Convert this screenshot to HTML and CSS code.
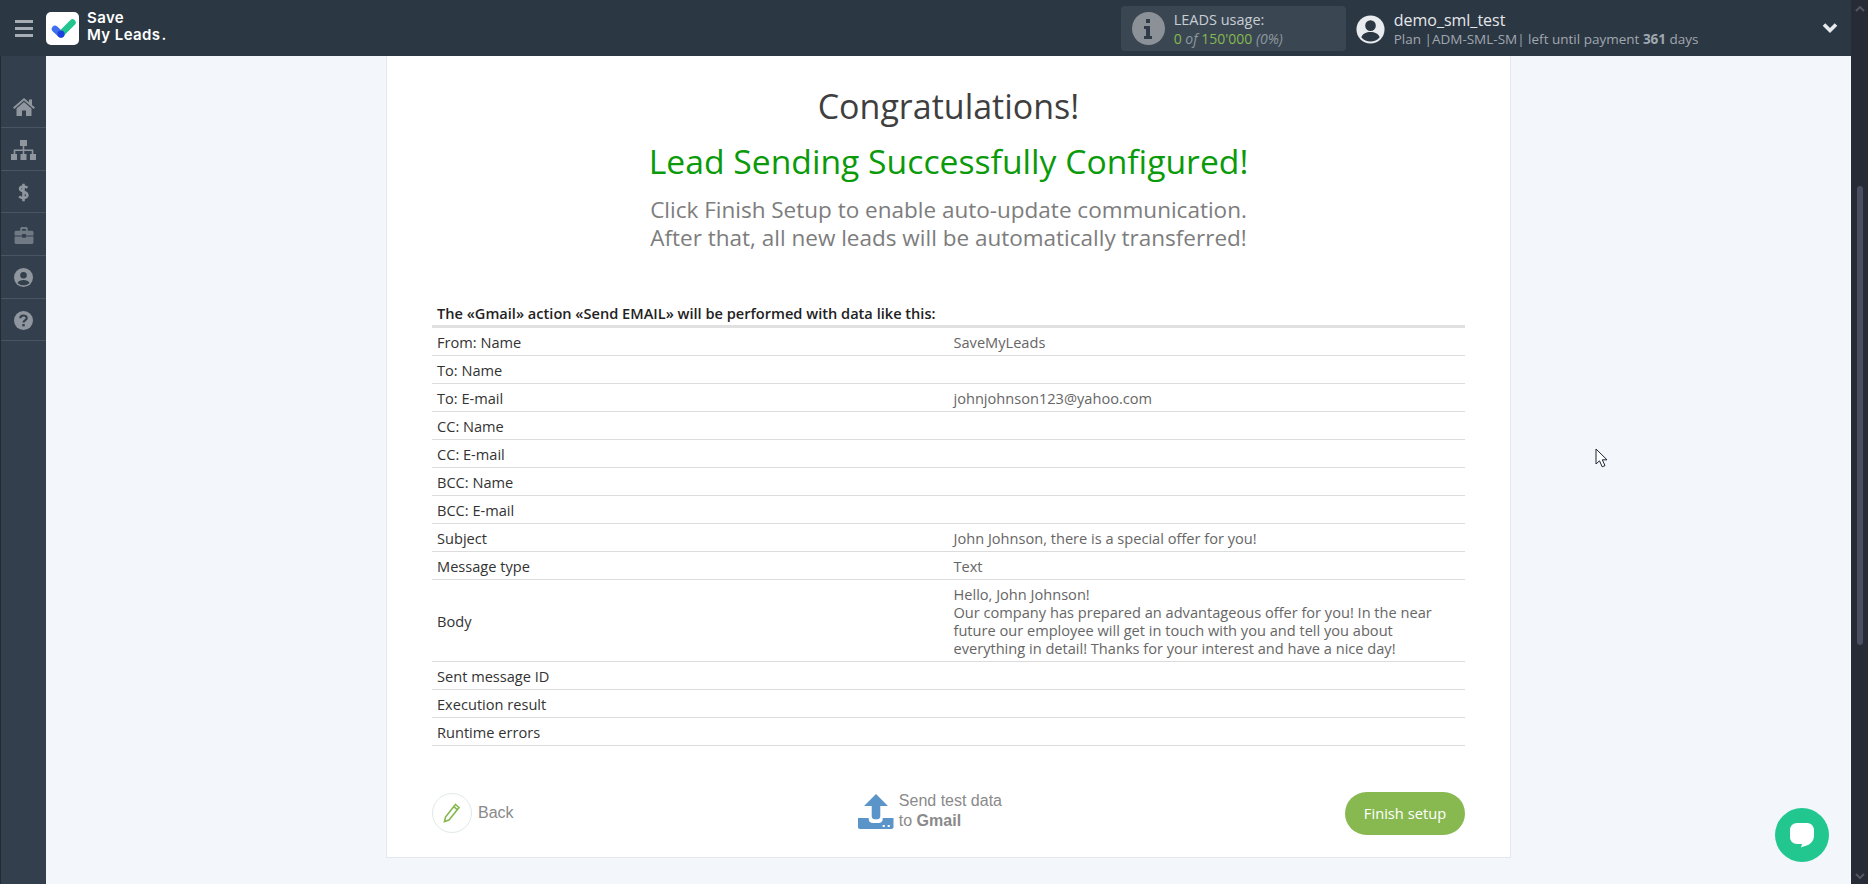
FILE: index.html
```html
<!DOCTYPE html>
<html>

<head>
    <meta charset="utf-8">
    <title>Save My Leads</title>
    <link rel="stylesheet" href="styles.css">
</head>

<body>
    <div id="app">
        <header class="topbar">
            <div class="burger"><span></span><span></span><span></span></div>
            <div class="logo">
                <svg class="logo-mark" width="33" height="33" viewBox="0 0 33 33">
                    <rect width="33" height="33" rx="5" fill="#fff"/>
                    <path d="M9 17l6 5.500" stroke="#3f6ff0" stroke-width="6.500" stroke-linecap="round"/>
                    <path d="M15 22L26.500 10.500" stroke="#22c58f" stroke-width="6.500" stroke-linecap="round"/>
                    <circle cx="15" cy="22" r="3.600" fill="#1d3fe0"/>
                </svg>
                <div class="logo-text">Save<br>My Leads<span class="logo-dot">.</span></div>
            </div>
            <div class="usage">
                <div class="usage-icon">
                    <svg width="10" height="20" viewBox="0 0 10 20"><path d="M3 0h4v4H3zM1 7h6v10h2v3H1v-3h2v-7H1z" fill="#2f3b48"/></svg>
                </div>
                <div class="usage-text">
                    <div class="usage-title">LEADS usage:</div>
                    <div class="usage-count"><span class="green">0</span> <i>of</i> <span class="green">150'000</span> <i>(0%)</i></div>
                </div>
            </div>
            <div class="account">
                <svg class="account-icon" width="29" height="29" viewBox="0 0 30 30">
                    <circle cx="15" cy="15" r="14.500" fill="#e9ecef"/>
                    <circle cx="15" cy="11" r="5.500" fill="#2c3744"/>
                    <path d="M5.500 23c1.500-4 5-5.500 9.500-5.500s8 1.500 9.500 5.500c-2.500 3-5.800 4.500-9.500 4.500s-7-1.500-9.500-4.500z" fill="#2c3744"/>
                </svg>
                <div class="account-text">
                    <div class="account-name">demo_sml_test</div>
                    <div class="account-plan">Plan |ADM-SML-SM| left until payment <b>361</b> days</div>
                </div>
            </div>
            <svg class="chevron" width="16" height="12" viewBox="0 0 16 12"><path d="M2 2.500l6 6 6-6" fill="none" stroke="#e8ebee" stroke-width="3.600"/></svg>
        </header>

        <div class="main">
            <nav class="sidebar">
                <a class="side-item">
                    <svg width="22" height="18" viewBox="0 0 22 18"><path d="M11 0L0 9.500l1.300 1.400L11 2.600l9.700 8.300L22 9.500l-3-2.600V1.500h-3v2.800z M11 4L3.500 10.400V18h5.500v-5.500h4V18h5.500v-7.600z" fill="#8f969e"/></svg>
                </a>
                <a class="side-item">
                    <svg width="25" height="20" viewBox="0 0 25 20"><path d="M9 0h7v6H9zM0 14h6v6H0zM9.500 14h6v6h-6zM19 14h6v6h-6zM11.700 6h1.600v3.500h9V14h-1.600v-2.900h-7.400V14h-1.600v-2.900H4.300V14H2.700V9.500h9z" fill="#8f969e"/></svg>
                </a>
                <a class="side-item">
                    <svg width="11" height="19" viewBox="0 0 12 22"><path d="M10.500 5.500C9.500 4.500 8 4 6 4 3.500 4 2 5 2 6.700c0 4 8.500 2 8.500 7.400 0 2-2 3.400-4.500 3.400-2 0-3.800-.6-5-1.900M6 1v20" fill="none" stroke="#8f969e" stroke-width="3"/></svg>
                </a>
                <a class="side-item">
                    <svg width="20" height="17" viewBox="0 0 20 18"><path d="M6 4V1.500C6 .7 6.700 0 7.500 0h5c.8 0 1.500.7 1.500 1.500V4h4.500c.8 0 1.500.7 1.500 1.500V9h-8V7.500H8V9H0V5.500C0 4.700.7 4 1.500 4zM8 2v2h4V2zM0 10h8v1.500h4V10h8v6.500c0 .8-.7 1.500-1.500 1.500h-17C.7 18 0 17.300 0 16.500z" fill="#6f7a85"/></svg>
                </a>
                <a class="side-item">
                    <svg width="19" height="19" viewBox="0 0 19 19"><circle cx="9.500" cy="9.500" r="9.500" fill="#8f969e"/><circle cx="9.500" cy="7.300" r="3.300" fill="#333f4d"/><path d="M3.500 15c1-2.200 3.200-3 6-3s5 .8 6 3c-1.500 1.500-3.700 2.300-6 2.300s-4.500-.8-6-2.300z" fill="#333f4d"/></svg>
                </a>
                <a class="side-item">
                    <svg width="19" height="19" viewBox="0 0 19 19"><circle cx="9.500" cy="9.500" r="9.500" fill="#8f969e"/><path d="M6.300 7.200c0-1.700 1.400-2.700 3.200-2.700s3.200 1 3.200 2.500c0 2.300-3.200 2.300-3.200 4.400" fill="none" stroke="#333f4d" stroke-width="2.200"/><rect x="8.300" y="13" width="2.400" height="2.400" fill="#333f4d"/></svg>
                </a>
            </nav>

            <div class="content">
                <section class="card">
                    <h1 class="congrats">Congratulations!</h1>
                    <h2 class="configured">Lead Sending Successfully Configured!</h2>
                    <p class="hint">Click Finish Setup to enable auto-update communication.<br>After that, all new leads will be automatically transferred!</p>

                    <table class="data">
                        <thead>
                            <tr><th colspan="2">The «Gmail» action «Send EMAIL» will be performed with data like this:</th></tr>
                        </thead>
                        <tbody>
                            <tr><td>From: Name</td><td>SaveMyLeads</td></tr>
                            <tr><td>To: Name</td><td></td></tr>
                            <tr><td>To: E-mail</td><td>johnjohnson123@yahoo.com</td></tr>
                            <tr><td>CC: Name</td><td></td></tr>
                            <tr><td>CC: E-mail</td><td></td></tr>
                            <tr><td>BCC: Name</td><td></td></tr>
                            <tr><td>BCC: E-mail</td><td></td></tr>
                            <tr><td>Subject</td><td>John Johnson, there is a special offer for you!</td></tr>
                            <tr><td>Message type</td><td>Text</td></tr>
                            <tr><td>Body</td><td>Hello, John Johnson!<br>Our company has prepared an advantageous offer for you! In the near future our employee will get in touch with you and tell you about everything in detail! Thanks for your interest and have a nice day!</td></tr>
                            <tr><td>Sent message ID</td><td></td></tr>
                            <tr><td>Execution result</td><td></td></tr>
                            <tr><td>Runtime errors</td><td></td></tr>
                        </tbody>
                    </table>

                    <div class="actions">
                        <a class="back">
                            <span class="back-circle">
                                <svg width="18" height="20" viewBox="0 0 18 20"><path d="M12.500 1.500l3.500 3L6 17l-4.500 1.500L2.500 14zM10.800 3.700l3.500 3" fill="none" stroke="#85b84f" stroke-width="1.600"/></svg>
                            </span>
                            Back
                        </a>
                        <a class="send-test">
                            <svg width="36" height="35" viewBox="0 0 36 35"><path d="M18 0l12 12h-7.700v10c0 2-1.300 3.300-3 3.300h-2.600c-1.700 0-3-1.300-3-3.300V12H6z" fill="#5b94c8"/><path d="M0 24h10.700v1c0 2.500 1.800 4 4 4h6c2.200 0 4-1.500 4-4v-1H35.500v9c0 1-.8 2-2 2H2c-1.200 0-2-1-2-2z" fill="#5b94c8"/><rect x="24.700" y="31" width="2" height="2" fill="#fff"/><rect x="29.700" y="31" width="2" height="2" fill="#fff"/></svg>
                            <span class="send-text">Send test data<br>to <b>Gmail</b></span>
                        </a>
                        <a class="finish">Finish setup</a>
                    </div>
                </section>
            </div>
        </div>

        <div class="scrollbar">
            <span class="scroll-arrow">
                <svg width="10" height="6" viewBox="0 0 10 6"><path d="M1 5l4-4 4 4" fill="none" stroke="#55575e" stroke-width="2"/></svg>
            </span>
            <div class="scroll-track"><div class="scroll-thumb"></div></div>
            <span class="scroll-arrow">
                <svg width="10" height="6" viewBox="0 0 10 6"><path d="M1 1l4 4 4-4" fill="none" stroke="#55575e" stroke-width="2"/></svg>
            </span>
        </div>

        <svg class="cursor" width="14" height="20" viewBox="0 0 14 20"><path d="M1 1v15l3.500-3.200 2.700 6 2.800-1.200-2.700-5.800H12z" fill="#fff" stroke="#1c2430" stroke-width="1"/></svg>

        <div class="chat">
            <svg width="26" height="27" viewBox="0 0 26 27"><path d="M8 1h10c4 0 7 3 7 7v6c0 5-4 9-9 10l-4 1.500 1-3.500H8c-4 0-7-3-7-7V8c0-4 3-7 7-7z" fill="#fff"/></svg>
        </div>
    </div>
</body>

</html>
```

FILE: styles.css
```css
html, body {
    margin: 0;
    height: 100%;
    overflow: hidden;
}

body {
    font-family: 'Open Sans', sans-serif;
    color: #333;
}

#app {
    display: grid;
    grid-template-columns: 1fr 17px;
    grid-template-rows: 56px 1fr;
    height: 884px;
    position: relative;
    background-color: #f3f7fc;
}

/* top bar */
.topbar {
    grid-column: 1 / 2;
    display: flex;
    align-items: center;
    background-color: #2c3744;
    color: #fff;
}

.burger {
    display: flex;
    flex-direction: column;
    gap: 4px;
    width: 18px;
    margin-left: 15px;
}

.burger span {
    height: 3px;
    background-color: #a6acb3;
}

.logo {
    display: flex;
    align-items: center;
    margin-left: 13px;
}

.logo-text {
    margin-left: 8px;
    padding-bottom: 4px;
    font-family: 'Inter', sans-serif;
    font-weight: 600;
    font-size: 15px;
    line-height: 17px;
    letter-spacing: 0.4px;
}

.logo-dot {
    margin-left: 1px;
}

.usage {
    display: flex;
    align-items: center;
    width: 225px;
    height: 45px;
    margin-left: 954px;
    margin-top: 1px;
    background-color: #3a4753;
    border-radius: 4px;
    box-sizing: border-box;
    padding-left: 11px;
}

.usage-icon {
    display: flex;
    align-items: center;
    justify-content: center;
    width: 33px;
    height: 33px;
    border-radius: 50%;
    background-color: #8b9196;
}

.usage-text {
    margin-left: 9px;
    font-size: 14px;
    line-height: 19px;
    color: #c9ced3;
}

.usage-title {
    font-size: 14.500px;
}

.usage-count {
    color: #8e979f;
}

.green {
    color: #85b84f;
}

.account {
    display: flex;
    align-items: center;
    margin-left: 10px;
    margin-top: 2px;
}

.account-text {
    margin-left: 9px;
}

.account-name {
    font-size: 16px;
    line-height: 20px;
    color: #e4e7ea;
}

.account-plan {
    font-size: 13.500px;
    line-height: 18px;
    color: #a0a7ae;
}

.chevron {
    margin-left: auto;
    margin-right: 13px;
}

/* sidebar and content */
.main {
    grid-column: 1 / 2;
    display: flex;
    min-height: 0;
}

.sidebar {
    width: 46px;
    flex: 0 0 auto;
    padding-top: 28px;
    background-color: #333f4d;
    border-left: 1px solid #232a33;
    box-sizing: border-box;
}

.side-item {
    display: flex;
    align-items: center;
    justify-content: center;
    height: 42.670px;
    padding-top: 2px;
    border-bottom: 1px solid #4a5561;
    box-sizing: border-box;
}

.side-item:first-child {
    height: 44px;
    padding-top: 3px;
}

.content {
    flex: 1 1 auto;
    display: flex;
    align-items: flex-start;
    padding-left: 340px;
}

.card {
    width: 1125px;
    height: 802px;
    box-sizing: border-box;
    padding: 30px 45px 0;
    background-color: #fff;
    border: 1px solid #e4e8ee;
    border-top: 0;
}

.congrats {
    margin: 0;
    font-weight: 400;
    font-size: 34px;
    line-height: 40px;
    text-align: center;
    color: #3f3f3f;
}

.configured {
    margin: 14px 0 0;
    font-weight: 400;
    font-size: 33.700px;
    line-height: 42px;
    text-align: center;
    color: #0a9a0a;
}

.hint {
    margin: 14px 0 0;
    font-size: 22.500px;
    line-height: 27.500px;
    text-align: center;
    color: #7d7d7d;
}

.data {
    width: 100%;
    margin-top: 49px;
    border-collapse: collapse;
    table-layout: fixed;
    font-size: 14.600px;
    line-height: 18px;
}

.data th {
    height: 25px;
    padding: 0 5px;
    text-align: left;
    font-weight: 600;
    color: #222;
    border-bottom: 3px solid #e0e0e0;
}

.data td {
    padding: 5px 5px 4px;
    color: #333;
    border-bottom: 1px solid #dcdcdc;
}

.data td:empty::before {
    content: "\00a0";
}

.data td + td {
    padding-right: 25px;
    color: #666;
}

.actions {
    display: flex;
    align-items: center;
    margin-top: 45px;
}

.back {
    display: flex;
    align-items: center;
    flex: 1 1 0;
    font-family: 'Liberation Sans', sans-serif;
    font-size: 16px;
    color: #8a8a8a;
}

.back-circle {
    display: flex;
    align-items: center;
    justify-content: center;
    width: 38px;
    height: 38px;
    margin-right: 6px;
    border: 1px solid #dfe9e6;
    border-radius: 50%;
}

.send-test {
    display: flex;
    align-items: center;
    margin-bottom: 4px;
    font-family: 'Liberation Sans', sans-serif;
    font-size: 16px;
    line-height: 20px;
    color: #8a8a8a;
}

.send-text {
    margin-left: 5px;
}

.finish {
    flex: 0 0 auto;
    width: 120px;
    height: 43px;
    margin-left: 343px;
    line-height: 43px;
    text-align: center;
    font-size: 14.700px;
    color: #fff;
    background-color: #88b951;
    border-radius: 22px;
}

/* window scrollbar */
.scrollbar {
    grid-column: 2;
    grid-row: 1 / 3;
    display: flex;
    flex-direction: column;
    align-items: center;
    background-color: #272b36;
}

.scroll-arrow {
    display: flex;
    align-items: center;
    justify-content: center;
    height: 17px;
}

.scroll-track {
    flex: 1 1 auto;
    width: 100%;
    padding-top: 169px;
    box-sizing: border-box;
}

.scroll-thumb {
    height: 459px;
    margin: 0 5px 0 6px;
    background-color: #4b4e60;
    border-radius: 3px;
}

/* overlays */
.cursor {
    position: absolute;
    left: 1595px;
    top: 448px;
}

.chat {
    position: absolute;
    left: 1775px;
    top: 808px;
    display: flex;
    align-items: center;
    justify-content: center;
    width: 54px;
    height: 54px;
    border-radius: 50%;
    background-color: #21c78f;
}
```
